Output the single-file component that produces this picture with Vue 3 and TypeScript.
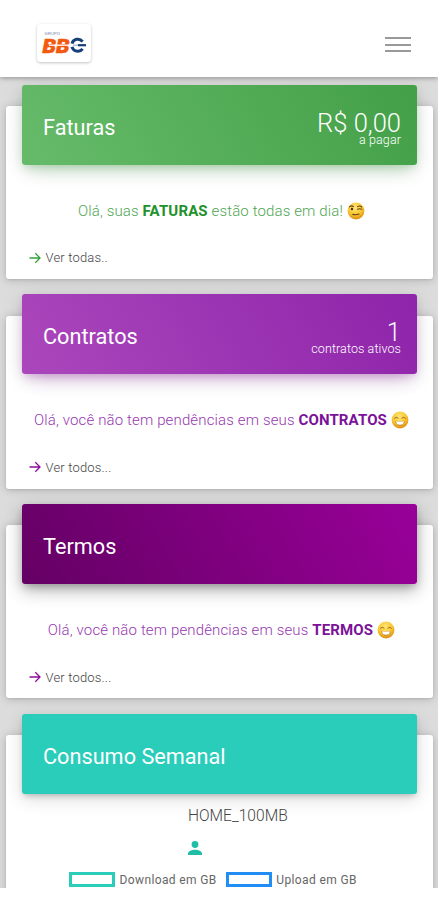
<script setup lang="ts">
interface SummaryCard {
  id: string
  title: string
  value?: string
  caption?: string
  before: string
  strong: string
  after: string
  link: string
  face: 'wink' | 'grin'
}

const cards: SummaryCard[] = [
  { id: 'faturas', title: 'Faturas', value: 'R$ 0,00', caption: 'a pagar', before: 'Olá, suas ', strong: 'FATURAS', after: ' estão todas em dia!', link: 'Ver todas..', face: 'wink' },
  { id: 'contratos', title: 'Contratos', value: '1', caption: 'contratos ativos', before: 'Olá, você não tem pendências em seus ', strong: 'CONTRATOS', after: '', link: 'Ver todos...', face: 'grin' },
  { id: 'termos', title: 'Termos', before: 'Olá, você não tem pendências em seus ', strong: 'TERMOS', after: '', link: 'Ver todos...', face: 'grin' },
]
</script>

<template>
  <div class="screen">
    <header class="topbar">
      <div class="logo">
        <svg width="54" height="39" viewBox="0 0 54 39" aria-label="BBG">
          <text x="7.500" y="11" class="logo-small" textLength="15.500" lengthAdjust="spacingAndGlyphs">GRUPO</text>
          <text x="5.500" y="28.500" class="logo-main" textLength="27" lengthAdjust="spacingAndGlyphs">BB</text>
          <path d="M45.600 17.600a6 6 0 0 0-10.600 2M45.600 24.800a6 6 0 0 1-10.600-2" fill="none" stroke="#173f78" stroke-width="3" />
          <path d="M12 21.200h27" stroke="#fff" stroke-width="1.300" />
          <path d="M41 21.200h8" stroke="#173f78" stroke-width="2.200" />
          <path d="M36 21.200h5" stroke="#8ba0be" stroke-width="1" />
        </svg>
      </div>
      <button class="menu" aria-label="Menu"><i></i><i></i><i></i></button>
    </header>

    <main class="cards">
      <section v-for="card in cards" :key="card.id" class="card" :class="card.id">
        <div class="banner">
          <h2>{{ card.title }}</h2>
          <div v-if="card.value" class="stat">
            <span class="value">{{ card.value }}</span>
            <span class="caption">{{ card.caption }}</span>
          </div>
        </div>
        <p class="message">
          <span class="copy">{{ card.before }}<strong>{{ card.strong }}</strong>{{ card.after }}</span>
          <svg class="face" viewBox="0 0 18 18">
            <defs>
              <radialGradient :id="'skin-' + card.id" cx="45%" cy="30%" r="70%">
                <stop offset="0" stop-color="#ffe578" />
                <stop offset=".6" stop-color="#f9c730" />
                <stop offset="1" stop-color="#dc8c13" />
              </radialGradient>
            </defs>
            <circle cx="9" cy="9" r="8.400" :fill="`url(#skin-${card.id})`" />
            <template v-if="card.face === 'wink'">
              <path d="M2.500 4.800q2-1.700 4-.2M10.500 4.600q2.200-1.400 4.200.4M10.600 7.200q2-1 4.200.1M5.800 12.400q3.200.8 6.200-.3" fill="none" stroke="#6b4317" stroke-width="1.100" stroke-linecap="round" />
              <ellipse cx="5" cy="7" rx="1.200" ry="1.300" fill="#4b2c14" />
            </template>
            <template v-else>
              <path d="M3.500 7.200q1.700-2 3.600-.2M10.900 7q2-1.800 3.600.2" fill="none" stroke="#9b671a" stroke-width="1" stroke-linecap="round" />
              <path d="M4.300 9.700q4.700 1 9.400 0q-.4 5-4.700 5t-4.700-5z" fill="#c38a32" />
              <path d="M5 10.200q4 .8 8 0l-1 3.100q-3 .8-6 0z" fill="#fff" />
            </template>
          </svg>
        </p>
        <a class="more">
          <svg width="12" height="12" viewBox="0 0 12 12"><path d="M.5 6h10.300M6.300 1.300 11 6l-4.700 4.700" fill="none" stroke="currentColor" stroke-width="1.300" /></svg>
          <span>{{ card.link }}</span>
        </a>
      </section>

      <section class="card consumo">
        <div class="banner"><h2>Consumo Semanal</h2></div>
        <div class="usage">
          <span class="plan">HOME_100MB</span>
          <svg class="person" width="14" height="14" viewBox="0 0 14 14"><circle cx="7" cy="3.500" r="3.400" /><path d="M0 14v-1.500C0 10 4 8.700 7 8.700s7 1.300 7 3.800V14z" /></svg>
        </div>
        <div class="legend">
          <i class="swatch down"></i><span class="down-label">Download em GB</span>
          <i class="swatch up"></i><span class="up-label">Upload em GB</span>
        </div>
      </section>
    </main>
  </div>
</template>

<style>
body { margin: 0; background: #fff; }
</style>

<style scoped>
.screen {
  height: 887.500px;
  overflow: hidden;
  display: flex;
  flex-direction: column;
  background: #dcdcdc;
  font-family: Roboto, "Liberation Sans", sans-serif;
}
.topbar {
  flex: none;
  height: 77px;
  box-sizing: border-box;
  padding: 24px 27px 0 37px;
  display: flex;
  justify-content: space-between;
  align-items: flex-start;
  background: #fff;
  box-shadow: 0 1px 5px rgba(0, 0, 0, .35);
  z-index: 1;
}
.logo {
  width: 54px;
  height: 38px;
  border-radius: 4px;
  background: #fff;
  box-shadow: 0 1px 3px rgba(0, 0, 0, .24);
}
.logo svg { display: block; }
.logo-small { font: 4px Roboto, sans-serif; fill: #8790ad; }
.logo-main { font: italic 900 20px Roboto, sans-serif; fill: #f3590f; stroke: #f3590f; stroke-width: .6px; }
.menu {
  border: 0;
  padding: 13px 0 0;
  background: none;
  display: flex;
  flex-direction: column;
  gap: 4.500px;
}
.menu i { width: 26px; height: 2px; background: #999; }
.cards {
  padding: 29px 5px 0 6px;
  display: flex;
  flex-direction: column;
  gap: 36.670px;
}
.card {
  flex: none;
  height: 173px;
  box-sizing: border-box;
  padding: 0 16px;
  display: flex;
  flex-direction: column;
  border-radius: 3px;
  background: #fff;
  box-shadow: 0 1px 10px rgba(0, 0, 0, .2), 0 1px 2px rgba(0, 0, 0, .08);
}
.banner {
  flex: none;
  height: 80px;
  box-sizing: border-box;
  margin-top: -21.300px;
  padding: 0 16px 0 21px;
  display: flex;
  justify-content: space-between;
  border-radius: 3px;
  color: #fff;
}
.faturas .banner { background: linear-gradient(60deg, #66bb6a, #43a047); box-shadow: 0 12px 20px -10px rgba(76, 175, 80, .3), 0 4px 20px rgba(0, 0, 0, .13), 0 4px 8px -2px rgba(76, 175, 80, .25); }
.contratos .banner { background: linear-gradient(60deg, #ab47bc, #8e24aa); box-shadow: 0 12px 20px -10px rgba(156, 39, 176, .3), 0 4px 20px rgba(0, 0, 0, .13), 0 4px 8px -2px rgba(156, 39, 176, .25); }
.termos .banner { background: linear-gradient(60deg, #640064, #990099); box-shadow: 0 6px 18px rgba(0, 0, 0, .3), 0 4px 8px -2px rgba(0, 0, 0, .25); }
.consumo .banner { background: #2accba; box-shadow: 0 5px 18px rgba(0, 0, 0, .14), 0 3px 6px -2px rgba(0, 0, 0, .25); }
h2 {
  margin: 0;
  font-size: 21.700px;
  line-height: 86px;
  font-weight: 400;
  white-space: nowrap;
}
.stat {
  padding-top: 27px;
  display: flex;
  flex-direction: column;
  align-items: flex-end;
  font-weight: 300;
}
.value { font-size: 25.500px; line-height: 22px; }
.caption { font-size: 12.500px; line-height: 12px; letter-spacing: .1px; }
.message {
  flex: none;
  height: 24px;
  margin: 34px -4px 0 0;
  display: flex;
  justify-content: center;
  align-items: center;
  gap: 4px;
  font-size: 15px;
  letter-spacing: .14px;
  font-weight: 300;
  color: #9638b0;
  white-space: nowrap;
}
.faturas .message { color: #4fa653; }
.faturas strong { color: #22912b; }
strong { font-weight: 700; color: #7b1299; }
.face { width: 18px; height: 18px; flex: none; }
.more {
  display: flex;
  align-items: center;
  gap: 4.500px;
  margin-top: 26px;
  padding-left: 7px;
  height: 18px;
  color: #8e0d9b;
  font-size: 13px;
  letter-spacing: .18px;
}
.more span { color: #444; font-weight: 300; }
.faturas .more { color: #35a13b; }
.usage {
  padding: 12px 0 0 166px;
  display: flex;
  flex-direction: column;
  align-items: flex-start;
}
.plan { font-size: 15.600px; line-height: 20px; font-weight: 300; color: #444; }
.person { margin-top: 15px; fill: #20bea6; }
.legend {
  margin-top: 17px;
  padding-left: 47px;
  display: flex;
  align-items: center;
  height: 16px;
  font-size: 12px;
  letter-spacing: .38px;
  color: #666;
  white-space: nowrap;
}
.swatch { box-sizing: border-box; width: 46px; height: 15px; flex: none; border: 3px solid #2accba; }
.swatch.up { border-color: #218df5; margin-left: 9px; }
.down-label, .up-label { margin-left: 4.500px; }
</style>
